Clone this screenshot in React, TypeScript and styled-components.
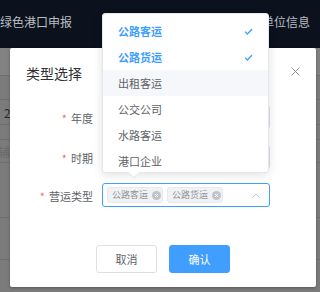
import styled, { createGlobalStyle } from 'styled-components'

const Global = createGlobalStyle`
  html, body { margin: 0; padding: 0; }
  body {
    font-family: "Noto Sans CJK SC", "Noto Sans", sans-serif;
    background: #7b7b7b;
  }
`

const Page = styled.div`
  position: relative;
  width: 320px;
  height: 292px;
  overflow: hidden;
  background: #7b7b7b;
`

const TopBar = styled.div`
  height: 48px;
  background: #0b111d;
  display: flex;
  align-items: center;
  justify-content: space-between;
  padding: 0 10px 6px 0;
  box-sizing: border-box;
  color: #b9bcc2;
  font-size: 12px;
`

const Rows = styled.div`
  display: flex;
  flex-direction: column;
`

const BgRow = styled.div<{ h: number, light?: boolean }>`
  height: ${p => p.h}px;
  border-bottom: 1px solid #6f6f6f;
  box-sizing: border-box;
  background: ${p => p.light ? '#828282' : 'transparent'};
  display: flex;
  align-items: center;
  justify-content: space-between;
  padding: 0 0 0 4px;
  font-size: 12px;
  color: #2a2a2a;
`

const Faint = styled.span`
  color: #6a6a6a;
  margin-left: -6px;
`

const Dialog = styled.div`
  position: absolute;
  left: 10px;
  top: 48px;
  width: 306px;
  height: 239px;
  background: #fff;
  border-radius: 2px;
  box-shadow: 0 1px 3px rgba(0, 0, 0, .3);
  display: flex;
  flex-direction: column;
`

const DialogHead = styled.div`
  display: flex;
  align-items: center;
  justify-content: space-between;
  padding: 16px 16px 0 16px;
  height: 19px;
`

const Title = styled.span`
  font-size: 14px;
  line-height: 19px;
  color: #303133;
`

const Close = styled.svg`
  width: 9px;
  height: 9px;
  margin-top: -4px;
`

const Form = styled.div`
  display: flex;
  flex-direction: column;
  padding: 22px 0 0 0;
`

const Row = styled.div<{ gap?: number }>`
  display: grid;
  grid-template-columns: 83px 168px;
  column-gap: 9px;
  align-items: center;
  margin-top: ${p => p.gap ?? 0}px;
`

const Label = styled.label`
  font-size: 11px;
  line-height: 16px;
  padding-top: 1px;
  color: #606266;
  text-align: right;
  &::before {
    content: '*';
    color: #f56c6c;
    margin-right: 4px;
  }
`

const Input = styled.div<{ focus?: boolean }>`
  height: 24px;
  box-sizing: border-box;
  border: 1px solid ${p => p.focus ? '#409eff' : '#dcdfe6'};
  border-radius: 3px;
  display: flex;
  align-items: center;
  padding: 0 9px 0 4px;
  gap: 4px;
`

const Tag = styled.span`
  display: inline-flex;
  align-items: center;
  gap: 4px;
  height: 16px;
  box-sizing: border-box;
  padding: 0 1px 0 4px;
  background: #f0f2f5;
  border: 1px solid #e9e9eb;
  border-radius: 3px;
  font-size: 9px;
  line-height: 14px;
  color: #909399;
`

const TagClose = styled.span`
  width: 9px;
  height: 9px;
  border-radius: 50%;
  background: #c0c4cc;
  display: inline-flex;
  align-items: center;
  justify-content: center;
`

const Arrow = styled.svg`
  margin-left: auto;
  width: 8px;
  height: 5px;
`

const Footer = styled.div`
  display: flex;
  justify-content: center;
  gap: 12px;
  margin-top: 38px;
`

const Button = styled.button<{ primary?: boolean }>`
  width: 61px;
  height: 28px;
  border-radius: 3px;
  font-family: inherit;
  font-size: 11px;
  border: 1px solid ${p => p.primary ? '#409eff' : '#dcdfe6'};
  background: ${p => p.primary ? '#409eff' : '#fff'};
  color: ${p => p.primary ? '#fff' : '#606266'};
  padding: 0;
`

const Popper = styled.div`
  position: absolute;
  left: 102px;
  top: 13px;
  width: 167px;
  height: 160px;
  box-sizing: border-box;
  background: #fff;
  border: 1px solid #e4e7ed;
  border-radius: 3px;
  box-shadow: 0 2px 10px rgba(0, 0, 0, .12);
  &::after {
    content: '';
    position: absolute;
    left: 27px;
    bottom: -5px;
    width: 7px;
    height: 7px;
    background: #fff;
    border-right: 1px solid #e4e7ed;
    border-bottom: 1px solid #e4e7ed;
    transform: rotate(45deg);
  }
`

const List = styled.ul`
  list-style: none;
  margin: 0;
  padding: 4px 0 0;
  height: 100%;
  box-sizing: border-box;
  overflow: hidden;
`

const Item = styled.li<{ selected?: boolean, hover?: boolean }>`
  height: 26px;
  display: flex;
  align-items: center;
  justify-content: space-between;
  padding: 0 15px;
  font-size: 11px;
  color: ${p => p.selected ? '#409eff' : '#606266'};
  font-weight: ${p => p.selected ? 700 : 400};
  background: ${p => p.hover ? '#f5f7fa' : 'transparent'};
`

const Check = () =>
  <svg width="9" height="7" viewBox="0 0 9 7">
    <path d="M1 3.6 L3.4 6 L8 1" fill="none" stroke="#409eff" strokeWidth="1.3" />
  </svg>

const options = [
  { label: '公路客运', selected: true },
  { label: '公路货运', selected: true },
  { label: '出租客运', hover: true },
  { label: '公交公司' },
  { label: '水路客运' },
  { label: '港口企业' },
]

const Chip = ({ children }: { children: string }) =>
  <Tag>
    {children}
    <TagClose>
      <svg width="5" height="5" viewBox="0 0 5 5">
        <path d="M1 1 L4 4 M4 1 L1 4" stroke="#fff" strokeWidth="1" />
      </svg>
    </TagClose>
  </Tag>

export default function App() {
  return <Page>
    <Global />
    <TopBar>
      <span>绿色港口申报</span>
      <span>单位信息</span>
    </TopBar>
    <Rows>
      <BgRow h={28} light />
      <BgRow h={24} />
      <BgRow h={25}><span>2</span></BgRow>
      <BgRow h={15} />
      <BgRow h={23}><Faint>辅</Faint></BgRow>
      <BgRow h={55} />
      <BgRow h={42} />
    </Rows>

    <Dialog>
      <DialogHead>
        <Title>类型选择</Title>
        <Close viewBox="0 0 9 9">
          <path d="M0.5 0.5 L8.5 8.5 M8.5 0.5 L0.5 8.5" stroke="#909399" strokeWidth="1" />
        </Close>
      </DialogHead>
      <Form>
        <Row>
          <Label>年度</Label>
          <Input />
        </Row>
        <Row gap={16}>
          <Label>时期</Label>
          <Input />
        </Row>
        <Row gap={14}>
          <Label>营运类型</Label>
          <Input focus>
            <Chip>公路客运</Chip>
            <Chip>公路货运</Chip>
            <Arrow viewBox="0 0 8 5">
              <path d="M0.5 4.5 L4 1 L7.5 4.5" fill="none" stroke="#c0c4cc" strokeWidth="1" />
            </Arrow>
          </Input>
        </Row>
      </Form>
      <Footer>
        <Button>取消</Button>
        <Button primary>确认</Button>
      </Footer>
    </Dialog>

    <Popper>
      <List>
        {options.map(o =>
          <Item key={o.label} selected={o.selected} hover={o.hover}>
            {o.label}
            {o.selected && <Check />}
          </Item>
        )}
      </List>
    </Popper>
  </Page>
}
